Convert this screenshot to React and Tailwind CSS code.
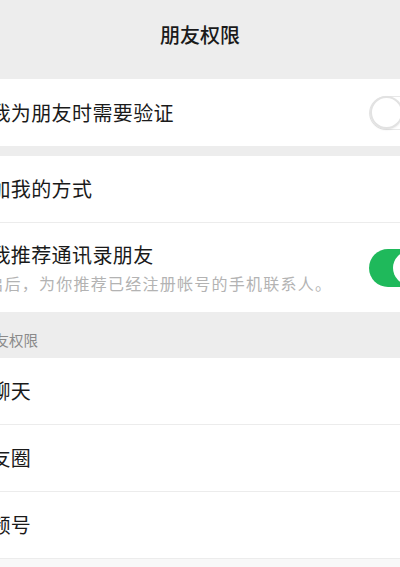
import React from 'react';

const font = { fontFamily: '"Noto Sans CJK SC", "Noto Sans", sans-serif' };

const SwitchOff = () => (
  <div className="ml-auto mr-[-25px] flex h-[34px] w-[56px] shrink-0 items-center rounded-full border border-[#e8e8e8] bg-white">
    <div className="h-[33px] w-[33px] rounded-full border-[2px] border-[#e2e2e2] bg-white shadow-[0_1px_2px_rgba(0,0,0,0.08)]" />
  </div>
);

const SwitchOn = () => (
  <div className="ml-auto mr-[-29px] flex h-[38px] w-[60px] shrink-0 items-center justify-end rounded-full bg-[#1fb95b] p-[2px]">
    <div className="h-[34px] w-[34px] rounded-full bg-white" />
  </div>
);

const Row = ({ label, divider = true, children }) => (
  <div className={`flex h-[67px] items-center overflow-hidden bg-white ${divider ? 'border-b border-[#ececec]' : ''}`}>
    <span className="ml-[-30px] whitespace-nowrap text-[20px] tracking-[0.4px] text-[#1a1a1a]">{label}</span>
    {children}
  </div>
);

export default function App() {
  return (
    <div className="h-[567px] w-full overflow-hidden bg-[#f8f8f8]" style={font}>
      {/* header */}
      <div className="flex h-[79px] items-start justify-center bg-[#ededed] pt-[20px]">
        <span className="text-[20px] font-medium leading-[30px] text-[#1a1a1a]">朋友权限</span>
      </div>

      <Row label="加我为朋友时需要验证" divider={false}>
        <SwitchOff />
      </Row>

      <div className="h-[10px] bg-[#ededed]" />

      <Row label="添加我的方式" />
      <div className="flex h-[89px] items-center overflow-hidden bg-white">
        <div className="ml-[-30px] flex flex-col whitespace-nowrap">
          <span className="text-[20px] leading-[30px] tracking-[0.4px] text-[#1a1a1a]">向我推荐通讯录朋友</span>
          <span className="mt-[1px] text-[16px] leading-[24px] tracking-[1.25px] text-[#b3b3b3]">开启后，为你推荐已经注册帐号的手机联系人。</span>
        </div>
        <SwitchOn />
      </div>

      <div className="flex h-[46px] items-end overflow-hidden bg-[#ededed] pb-[7px]">
        <span className="ml-[-20px] whitespace-nowrap text-[14.5px] leading-[22px] text-[#8a8a8a]">朋友权限</span>
      </div>

      <Row label="仅聊天" />
      <Row label="朋友圈" />
      <Row label="视频号" />
    </div>
  );
}
